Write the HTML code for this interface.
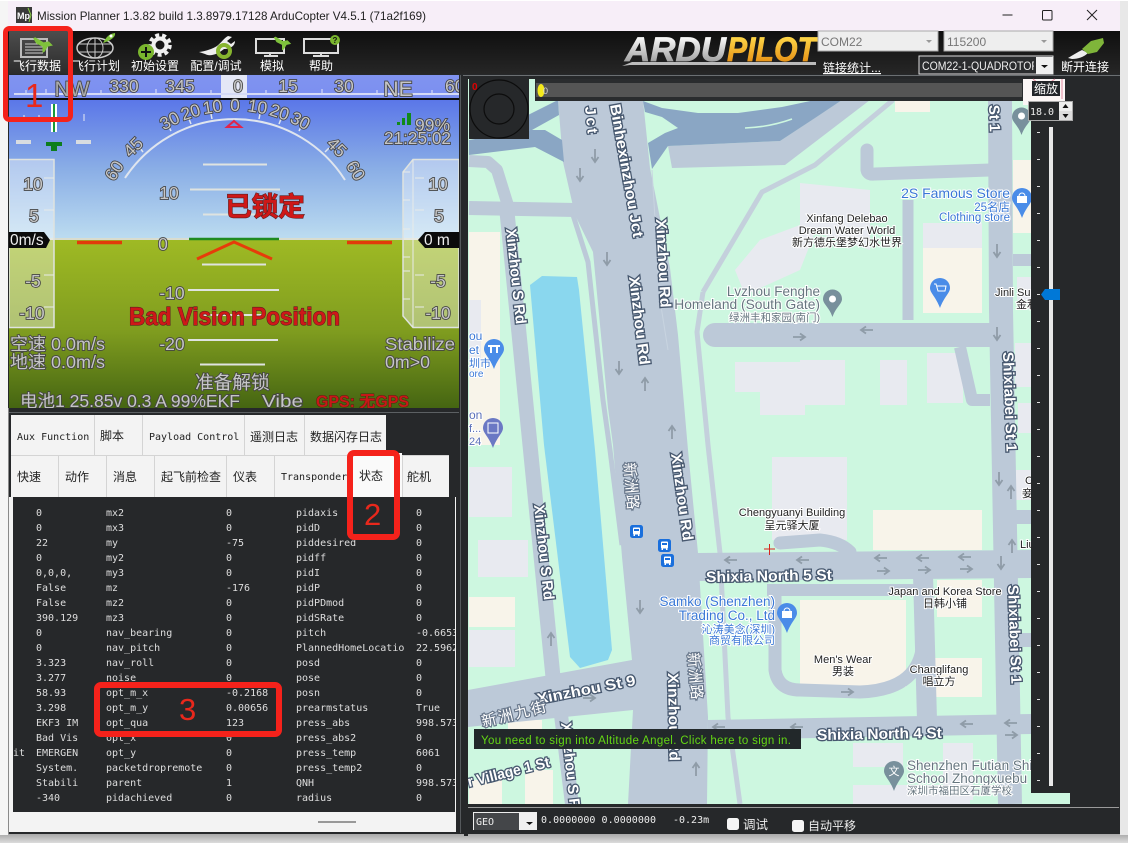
<!DOCTYPE html>
<html><head><meta charset="utf-8"><title>Mission Planner</title>
<style>
html,body{margin:0;padding:0;width:1128px;height:843px;overflow:hidden;background:#f2f2f2}
svg{position:absolute;left:0;top:0}
text{font-family:"Liberation Sans","Noto Sans CJK SC",sans-serif}
.hud{fill:#c6c6c6;stroke:#444;stroke-width:1.700px;paint-order:stroke;font-size:17.500px}
.tb{fill:#fff;font-size:12px;text-anchor:middle}
.tab{fill:#222;font-size:12px}
.tabm{fill:#222;font-size:10px;font-family:"DejaVu Sans Mono",monospace}
.rd{fill:#fff;stroke:#47586f;stroke-width:2.600px;paint-order:stroke;font-weight:bold;font-size:15px}
.cn{fill:#fff;stroke:#69788c;stroke-width:2.400px;paint-order:stroke;font-size:15px}
.poi{fill:#222;stroke:#fff;stroke-width:2px;paint-order:stroke;font-size:11px}
.blue{fill:#3a78d6;stroke:#fff;stroke-width:2px;paint-order:stroke}
.gry{fill:#66767f;stroke:#fff;stroke-width:2px;paint-order:stroke}
pre{position:absolute;margin:0;font:10px/15px "DejaVu Sans Mono",monospace;color:#dedede;top:506px}
</style></head><body>
<svg width="1128" height="843" viewBox="0 0 1128 843">
<defs>
<linearGradient id="sky" x1="0" y1="99" x2="0" y2="239" gradientUnits="userSpaceOnUse"><stop offset="0" stop-color="#5a76e8"/><stop offset=".5" stop-color="#8aaee6"/><stop offset="1" stop-color="#bcdcf0"/></linearGradient>
<linearGradient id="gnd" x1="0" y1="239" x2="0" y2="408" gradientUnits="userSpaceOnUse"><stop offset="0" stop-color="#9fba24"/><stop offset=".55" stop-color="#7f9c1f"/><stop offset="1" stop-color="#456512"/></linearGradient>
<linearGradient id="cmp" x1="0" y1="75" x2="0" y2="99" gradientUnits="userSpaceOnUse"><stop offset="0" stop-color="#8093f0"/><stop offset="1" stop-color="#7b8ff0"/></linearGradient>
<linearGradient id="sel" x1="0" y1="31" x2="0" y2="74" gradientUnits="userSpaceOnUse"><stop offset="0" stop-color="#4d4d4d"/><stop offset="1" stop-color="#2c2c2c"/></linearGradient>
<linearGradient id="tbg" x1="0" y1="31" x2="0" y2="74" gradientUnits="userSpaceOnUse"><stop offset="0" stop-color="#0f0f0f"/><stop offset="1" stop-color="#262626"/></linearGradient>
<linearGradient id="sil" x1="0" y1="36" x2="0" y2="64" gradientUnits="userSpaceOnUse"><stop offset="0" stop-color="#fff"/><stop offset="1" stop-color="#999"/></linearGradient>
<linearGradient id="gold" x1="0" y1="36" x2="0" y2="64" gradientUnits="userSpaceOnUse"><stop offset="0" stop-color="#ffd94a"/><stop offset="1" stop-color="#e58d12"/></linearGradient>
<linearGradient id="shd" x1="0" y1="834" x2="0" y2="843" gradientUnits="userSpaceOnUse"><stop offset="0" stop-color="#a8a8a8"/><stop offset="1" stop-color="#dcdcdc"/></linearGradient>
<clipPath id="hudc"><rect x="9" y="75" width="450" height="333"/></clipPath>
<clipPath id="mapc"><rect x="468" y="79" width="563" height="725"/></clipPath>
<clipPath id="comc"><rect x="922" y="57" width="112" height="17"/></clipPath>
<symbol id="dn" viewBox="0 0 10 14" overflow="visible"><path d="M5 0V12M1.500 8L5 13 8.500 8" fill="none" stroke="#8f9ca8" stroke-width="1.800"/></symbol>
<symbol id="lf" viewBox="0 0 14 10" overflow="visible"><path d="M13 5H2M6 1.500L1 5l5 3.500" fill="none" stroke="#8f9ca8" stroke-width="1.800"/></symbol>
<symbol id="rt" viewBox="0 0 14 10" overflow="visible"><path d="M1 5H12M8 1.500L13 5 8 8.500" fill="none" stroke="#8f9ca8" stroke-width="1.800"/></symbol>
<symbol id="up" viewBox="0 0 10 14" overflow="visible"><path d="M5 14V2M1.500 6L5 1l3.500 5" fill="none" stroke="#8f9ca8" stroke-width="1.800"/></symbol>
<symbol id="plane" viewBox="0 0 24 24" overflow="visible"><path d="M3 6L5 5 13 10 18 9 22 13 17 14 14 19 12 20 12 14 6 11Z" fill="#7fc23c"/></symbol>
<symbol id="bus" viewBox="0 0 13 13"><rect width="13" height="13" rx="2.500" fill="#1a6fdc"/><rect x="3" y="2.500" width="7" height="7" rx="1" fill="#fff"/><rect x="4" y="4" width="5" height="2" fill="#1a6fdc"/><rect x="3.500" y="9.500" width="1.500" height="1.500" fill="#fff"/><rect x="8" y="9.500" width="1.500" height="1.500" fill="#fff"/></symbol>
</defs>

<!-- window -->
<rect x="0" y="834" width="1128" height="9" fill="url(#shd)"/>
<rect x="0" y="0" width="8" height="835" fill="#f5f5f5"/>
<rect x="1120" y="0" width="8" height="835" fill="#e8e8e8"/>
<rect x="0" y="0" width="1128" height="1" fill="#fff"/>
<rect x="8" y="1" width="1112" height="30" fill="#f7eef8"/>
<rect x="8" y="31" width="1112" height="803" fill="#26282a"/>
<rect x="8" y="408" width="1" height="426" fill="#8a8a8a"/>
<rect x="16" y="7" width="16" height="16" fill="#3a3a3a"/><text x="17" y="19" font-size="9" font-weight="bold" fill="#fff">Mp</text><path d="M28 8l3 7-2 7" stroke="#8c4" fill="none"/>
<text x="37" y="20" font-size="12" fill="#222" textLength="389" lengthAdjust="spacingAndGlyphs">Mission Planner 1.3.82 build 1.3.8979.17128 ArduCopter V4.5.1 (71a2f169)</text>
<path d="M1002.500 15H1012.500" stroke="#222"/><rect x="1042.500" y="10.500" width="9.500" height="9.500" rx="1" fill="none" stroke="#222"/><path d="M1087 10L1097 20M1097 10L1087 20" stroke="#222"/>

<!-- toolbar -->
<rect x="8" y="31" width="1112" height="43" fill="url(#tbg)"/>
<rect x="9" y="31" width="61" height="43" fill="url(#sel)"/>
<g fill="none" stroke="#d5d5d5">
<path d="M21 39H47V57H21Z" stroke-width="2" stroke="#bbb"/><path d="M25 44H43M25 47H43M25 50H43M25 53H43" stroke="#ccc"/>
<ellipse cx="95" cy="48" rx="18" ry="10" stroke="#ccc" stroke-width="1.500"/><ellipse cx="95" cy="48" rx="8" ry="10" stroke="#ccc"/><path d="M95 38V58M78 44H112M78 52H112" stroke="#ccc"/>
<path d="M256 39H284V53H256Z" stroke="#ddd" stroke-width="2"/><path d="M264 56H278M270 54V57" stroke="#ddd" stroke-width="2"/>
<path d="M304 39H338V53H304Z" stroke="#ddd" stroke-width="2"/><path d="M313 56H329M321 54V57" stroke="#ddd" stroke-width="2"/>
</g>
<use href="#plane" x="30" y="32" width="25" height="25"/>
<path d="M103 43C106 38 108 34 115 33 116 37 110 41 103 43Z" fill="#7fc23c"/><circle cx="111" cy="36" r="1.500" fill="#fff"/>
<circle cx="160" cy="45" r="6.500" fill="none" stroke="#f0f0f0" stroke-width="4"/><circle cx="160" cy="45" r="10" fill="none" stroke="#f0f0f0" stroke-width="3.500" stroke-dasharray="4 3"/>
<circle cx="146" cy="52" r="8" fill="#7ab52e"/><path d="M141 52H151M146 47V57" stroke="#111" stroke-width="2"/>
<path d="M199 52C206 51 212 49 217 46 222 42 224 38 228 36L232 37 227 41 231 44 235 41C235 46 230 49 224 49 218 54 210 57 205 54Z" fill="#eee"/>
<circle cx="224" cy="51" r="6" fill="none" stroke="#87b52f" stroke-width="4"/>
<use href="#plane" x="271" y="32" width="22" height="22"/>
<circle cx="335" cy="40" r="5" fill="#7ab52e"/><text x="335" y="43" font-size="8" font-weight="bold" text-anchor="middle" fill="#111">?</text>
<text class="tb" x="37" y="70">飞行数据</text>
<text class="tb" x="96" y="70">飞行计划</text>
<text class="tb" x="155" y="70">初始设置</text>
<text class="tb" x="216" y="70">配置/调试</text>
<text class="tb" x="272" y="70">模拟</text>
<text class="tb" x="321" y="70">帮助</text>
<!-- logo -->
<text x="625" y="61" font-size="34" font-weight="bold" font-style="italic" fill="url(#sil)" stroke="url(#sil)" stroke-width=".7" textLength="101" lengthAdjust="spacingAndGlyphs">ARDU</text>
<text x="727" y="61" font-size="34" font-weight="bold" font-style="italic" fill="url(#gold)" stroke="url(#gold)" stroke-width=".7" textLength="89" lengthAdjust="spacingAndGlyphs">PILOT</text>
<path d="M622 66L632 62H816V65H630Z" fill="#bbb"/>
<!-- combos -->
<rect x="818" y="31" width="120" height="20" fill="#eee" stroke="#aaa"/><text x="821" y="46" font-size="12" fill="#777">COM22</text><path d="M926 40h6l-3 3z" fill="#999"/>
<rect x="944" y="31" width="109" height="20" fill="#eee" stroke="#aaa"/><text x="947" y="46" font-size="12" fill="#777">115200</text><path d="M1041 40h6l-3 3z" fill="#999"/>
<text x="823" y="72" font-size="12" fill="#fff" text-decoration="underline">链接统计...</text>
<rect x="919" y="56" width="134" height="18" fill="#2a2c2e" stroke="#ddd"/>
<g clip-path="url(#comc)"><text x="922" y="70" font-size="12" fill="#eee" textLength="117" lengthAdjust="spacingAndGlyphs">COM22-1-QUADROTOR</text></g>
<rect x="1036" y="57" width="17" height="17" fill="#f0f0f0"/><path d="M1041 65h7l-3.500 3z" fill="#111"/>
<path d="M1068 58C1073 55 1078 52 1082 50L1088 53C1084 57 1078 59 1072 59Z" fill="#eee"/><path d="M1082 49L1091 41 1103 38 1104 43 1097 52 1088 54Z" fill="#7fb53a"/>
<text class="tb" x="1085" y="71">断开连接</text>

<!-- HUD -->
<g clip-path="url(#hudc)">
<rect x="9" y="99" width="450" height="140" fill="url(#sky)"/>
<rect x="9" y="239" width="450" height="170" fill="url(#gnd)"/>
<rect x="9" y="75" width="450" height="24" fill="url(#cmp)"/>
<rect x="221" y="75" width="26" height="24" fill="#e4e7f6"/>
<rect x="14" y="93" width="445" height="2" fill="#d5daf5"/>
<path d="M26 93v-3M46 93v-4M101 93v-3M156 93v-4M211 93v-3M266 93v-3M322 93v-4M377 93v-3M432 93v-3" stroke="#e8eaf8"/>
<rect x="9" y="98" width="450" height="2" fill="#0c0c0c"/>
<text class="hud" x="72" y="96" text-anchor="middle" style="font-size:21px;fill:#aaa">NW</text>
<text class="hud" x="124" y="92" text-anchor="middle">330</text>
<text class="hud" x="180" y="92" text-anchor="middle">345</text>
<text class="hud" x="238" y="92" text-anchor="middle">0</text>
<text class="hud" x="288" y="92" text-anchor="middle">15</text>
<text class="hud" x="344" y="92" text-anchor="middle">30</text>
<text class="hud" x="398" y="96" text-anchor="middle" style="font-size:21px">NE</text>
<text class="hud" x="445" y="92">60</text>
<!-- arc -->
<path d="M125 178A131 131 0 0 1 345 180" fill="none" stroke="#dfe5ee" stroke-width="2"/>
<g stroke="#dfe5ee" stroke-width="1.500">
<path d="M212 119l-1-5M191 124l-2-5M171 131l-2-4M143 152l-3-4M259 119l1-5M279 124l2-5M299 131l2-4M325 152l4-4"/>
</g>
<text class="hud" x="235" y="111" text-anchor="middle" transform="rotate(0 235 249)">0</text>
<text class="hud" x="235" y="111" text-anchor="middle" transform="rotate(-9 235 249)">10</text>
<text class="hud" x="235" y="111" text-anchor="middle" transform="rotate(-18 235 249)">20</text>
<text class="hud" x="235" y="111" text-anchor="middle" transform="rotate(-27 235 249)">30</text>
<text class="hud" x="235" y="111" text-anchor="middle" transform="rotate(-45 235 249)">45</text>
<text class="hud" x="235" y="111" text-anchor="middle" transform="rotate(-57 235 249)">60</text>
<text class="hud" x="235" y="111" text-anchor="middle" transform="rotate(9 235 249)">10</text>
<text class="hud" x="235" y="111" text-anchor="middle" transform="rotate(18 235 249)">20</text>
<text class="hud" x="235" y="111" text-anchor="middle" transform="rotate(27 235 249)">30</text>
<text class="hud" x="235" y="111" text-anchor="middle" transform="rotate(45 235 249)">45</text>
<text class="hud" x="235" y="111" text-anchor="middle" transform="rotate(57 235 249)">60</text>
<path d="M234 121L241 127H227Z" fill="none" stroke="#e2234a" stroke-width="2"/>
<!-- pitch -->
<g stroke="#dfe3e0" stroke-width="2" fill="none">
<path d="M203 164.500H267M190 189.500H280M203 214.500H267M202 264.500H266M188 290H279M200 315H265M188 340H278M200 364.500H265"/>
<path d="M9 239H459" stroke="#d9dccf"/>
</g>
<path d="M189 239H279" stroke="#1f8a1f" stroke-width="2.500"/>
<path d="M77 242.500H122M347 242.500H392" stroke="#e23a0a" stroke-width="3.500"/>
<path d="M197 259L234 242 272 259" fill="none" stroke="#e63c0a" stroke-width="3"/>
<text class="hud" x="169" y="199" text-anchor="middle">10</text>
<text class="hud" x="163" y="250" text-anchor="middle">0</text>
<text class="hud" x="172" y="299" text-anchor="middle">-10</text>
<text class="hud" x="172" y="350" text-anchor="middle">-20</text>
<!-- tapes -->
<rect x="9" y="159.500" width="45" height="168" fill="#fff" fill-opacity=".38" stroke="#dfe3df" stroke-width="1.500"/>
<path d="M44 178H54M44 210H54M44 275H54M44 307H54" stroke="#e8ebe8"/>
<text class="hud" x="33" y="190" text-anchor="middle">10</text>
<text class="hud" x="34" y="222" text-anchor="middle">5</text>
<text class="hud" x="33" y="287" text-anchor="middle">-5</text>
<text class="hud" x="32" y="319" text-anchor="middle">-10</text>
<path d="M413 159.500H459V327.500H413L403 316V172Z" fill="#fff" fill-opacity=".38" stroke="#dfe3df" stroke-width="1.500"/>
<path d="M413 160V327M403 172H410M403 200H410M403 229H410M403 257H410M403 271H410M403 299H410M415 178H424M415 210H424M415 275H424M415 307H424" stroke="#e8ebe8"/>
<text class="hud" x="438" y="190" text-anchor="middle">10</text>
<text class="hud" x="439" y="222" text-anchor="middle">5</text>
<text class="hud" x="438" y="287" text-anchor="middle">-5</text>
<text class="hud" x="438" y="319" text-anchor="middle">-10</text>
<path d="M9 232H44L50 240 46 248H9Z" fill="#0b0b0b"/><text x="10" y="245" font-size="15.500" fill="#eee">0m/s</text>
<path d="M425 232H459V248H425L418 240Z" fill="#0b0b0b"/><text x="424" y="245" font-size="15.500" fill="#eee">0 m</text>
<!-- top-left indicators -->
<rect x="51" y="104" width="6" height="28" fill="#fff"/><rect x="53" y="104" width="2" height="28" fill="#1a9a3a"/>
<path d="M16 142H31M76 142H91" stroke="#d8dce0" stroke-width="4"/>
<path d="M46 142H62V146H57V151H51V146H46Z" fill="#0d7d1d"/>
<path d="M24 115v3M39 115v3M84 114v7" stroke="#e8eaf2"/>
<!-- signal -->
<path d="M397 122h3v3h-3zM402 118h3v7h-3zM407 113h4v12h-4z" fill="#118a1a"/>
<text class="hud" x="415" y="131">99%</text>
<text class="hud" x="384" y="144" textLength="67" lengthAdjust="spacingAndGlyphs">21:25:02</text>
<text x="265" y="216" text-anchor="middle" font-size="26.500" font-weight="bold" fill="#cf1818" stroke="#5d2020" stroke-width="1.200" paint-order="stroke">已锁定</text>
<text x="129" y="325" font-size="25" font-weight="bold" fill="#cf1818" stroke="#5d2020" stroke-width="1.200" paint-order="stroke" textLength="211" lengthAdjust="spacingAndGlyphs">Bad Vision Position</text>
<text class="hud" x="10" y="350" textLength="95" lengthAdjust="spacingAndGlyphs">空速 0.0m/s</text>
<text class="hud" x="10" y="368" textLength="95" lengthAdjust="spacingAndGlyphs">地速 0.0m/s</text>
<text class="hud" x="385" y="350" textLength="70" lengthAdjust="spacingAndGlyphs">Stabilize</text>
<text class="hud" x="385" y="368" textLength="45" lengthAdjust="spacingAndGlyphs">0m&gt;0</text>
<text class="hud" x="195" y="389" style="font-size:18.700px">准备解锁</text>
<text class="hud" x="20" y="407" textLength="220" lengthAdjust="spacingAndGlyphs">电池1 25.85v 0.3 A 99%EKF</text>
<text class="hud" x="262" y="407" textLength="41" lengthAdjust="spacingAndGlyphs">Vibe</text>
<text x="316" y="407" font-size="16.500" font-weight="bold" fill="#c81818" stroke="#4a2a10" paint-order="stroke" textLength="93" lengthAdjust="spacingAndGlyphs">GPS: 无GPS</text>
</g>

<!-- tabs -->
<rect x="9" y="412" width="450" height="1" fill="#5c6063"/>
<rect x="11" y="415" width="375" height="40" fill="#d4d4d4"/>
<rect x="11" y="455" width="438" height="42" fill="#d4d4d4"/>
<g fill="#f3f3f3">
<rect x="11" y="415" width="83" height="40"/><rect x="95" y="415" width="47" height="40"/><rect x="143" y="415" width="101" height="40"/><rect x="245" y="415" width="59" height="40"/><rect x="305" y="415" width="81" height="40"/>
<rect x="11" y="456" width="47" height="41"/><rect x="59" y="456" width="47" height="41"/><rect x="107" y="456" width="47" height="41"/><rect x="155" y="456" width="71" height="41"/><rect x="227" y="456" width="47" height="41"/><rect x="275" y="456" width="72" height="41"/><rect x="347" y="453" width="55" height="44" fill="#fafafa"/><rect x="403" y="456" width="46" height="41"/>
</g>
<text class="tabm" x="17" y="440">Aux Function</text>
<text class="tab" x="100" y="440">脚本</text>
<text class="tabm" x="149" y="440">Payload Control</text>
<text class="tab" x="250" y="441">遥测日志</text>
<text class="tab" x="310" y="441">数据闪存日志</text>
<text class="tab" x="17" y="481">快速</text>
<text class="tab" x="65" y="481">动作</text>
<text class="tab" x="113" y="481">消息</text>
<text class="tab" x="161" y="481">起飞前检查</text>
<text class="tab" x="233" y="481">仪表</text>
<text class="tabm" x="281" y="480">Transponder</text>
<text class="tab" x="359" y="480">状态</text>
<text class="tab" x="407" y="481">舵机</text>
<!-- grid frame -->
<rect x="9" y="497" width="447" height="335" fill="#f3f3f3"/>
<rect x="13" y="497" width="442" height="315" fill="#26282a"/>
<rect x="318" y="821" width="38" height="2" fill="#999"/>
<rect x="460" y="75" width="1" height="758" fill="#55595c"/>

<!-- map -->
<g clip-path="url(#mapc)">
<rect x="468" y="79" width="563" height="725" fill="#cdf7e0"/>
<g fill="#f8f4ea">
<rect x="469" y="232" width="31" height="213"/><rect x="469" y="597" width="46" height="30"/><rect x="469" y="780" width="33" height="24"/><rect x="525" y="770" width="28" height="34"/><rect x="508" y="720" width="34" height="30"/>
<rect x="923" y="248" width="59" height="65"/><rect x="1013" y="160" width="18" height="73"/><rect x="873" y="510" width="109" height="40"/><rect x="800" y="600" width="106" height="87"/><rect x="937" y="580" width="45" height="37"/><rect x="933" y="658" width="49" height="39"/><rect x="895" y="100" width="35" height="12"/>
</g>
<g fill="#e8eaf0">
<rect x="469" y="300" width="12" height="60"/><rect x="469" y="467" width="43" height="50"/><rect x="478" y="540" width="50" height="37"/><rect x="469" y="630" width="46" height="37"/>
<path d="M735 270L760 240 800 225 800 183 870 190 870 250 815 232 800 270 745 295Z"/><rect x="735" y="362" width="70" height="30"/><rect x="760" y="385" width="45" height="30"/><rect x="800" y="360" width="45" height="45"/><rect x="880" y="360" width="27" height="45"/><rect x="927" y="353" width="36" height="50"/><rect x="923" y="223" width="59" height="25"/><rect x="1017" y="277" width="14" height="23"/><rect x="1015" y="343" width="16" height="44"/><rect x="1018" y="403" width="13" height="30"/><rect x="772" y="457" width="75" height="83"/><rect x="853" y="743" width="50" height="24"/><rect x="943" y="743" width="30" height="57"/><rect x="853" y="785" width="117" height="19"/><rect x="1016" y="470" width="15" height="30"/>
</g>
<!-- water -->
<path d="M530 285L542 276 577 277 579 290 595 450 612 650 608 660 580 668 570 657 544 445Z" fill="#8ad7ee"/>
<!-- roads -->
<g fill="none" stroke="#bcc9d8" stroke-linejoin="round">
<path d="M469 161L488 162 497 170 510 212" stroke-width="12"/>
<path d="M469 208L575 210" stroke-width="14"/>
<path d="M507 212L530 445 553 677" stroke-width="15"/>
<path d="M561 715L572 804" stroke-width="14"/>
<path d="M703 292L762 192 815 165 893 100" stroke-width="5" stroke="#c4d0dc"/>
<path d="M703 292L697 332 708 445 720 553 728 717 740 804" stroke-width="5" stroke="#c4d0dc"/>
<path d="M573 215L588 262 603 400 610 450 622 545" stroke-width="5"/>
<path d="M715 335L1000 335" stroke-width="24" stroke-linecap="round"/>
<path d="M867 150L867 170Q868 175 875 174L990 170" stroke-width="13" stroke-linecap="round"/>
<path d="M908 200V320" stroke-width="11"/>
<path d="M1013 260H1032" stroke-width="12"/>
<path d="M960 347L972 400H990" stroke-width="12"/>
<path d="M1000 100L1001 310 1010 804" stroke-width="24"/>
<path d="M698 567L1032 564" stroke-width="28"/>
<path d="M708 730L1032 724" stroke-width="20"/>
<path d="M923 575L927 720" stroke-width="20"/>
<path d="M767 590H915" stroke-width="12"/>
<path d="M775 590L775 670Q778 690 800 690L860 692Q915 690 922 650" stroke-width="13"/>
<path d="M780 543L820 540Q840 542 850 552" stroke-width="13" stroke-linecap="round"/>
<path d="M1012 517H1032M1012 640H1032" stroke-width="14"/>
</g>
<!-- main road -->
<path d="M558 100H643L650 168 670 268 678 335 688 450 698 553 708 717 707 804H628L633 710 468 727V690L632 660 622 557 613 445 608 408 593 252 575 215 563 162Z" fill="#bcc9d8"/>
<path d="M652 170L660 300 668 350" fill="none" stroke="#c8d4e0"/>
<!-- light road -->
<path d="M668 146L780 141 842 100H870L785 165 672 168Z" fill="#bcc9d8"/>
<!-- highways -->
<g fill="#8aa6c4">
<path d="M469 140L530 130 545 130 562 140 564 162 535 147 469 155Z"/>
<path d="M528 115L558 100 559 115 532 130 528 130Z"/>
<path d="M643 101L662 108 698 113 738 113 782 107 815 100H842L815 118 780 141 668 146 652 169 648 143 665 133 678 128 662 117 645 112Z"/>
</g>
<path d="M745 128Q770 127 792 119" fill="none" stroke="#cdf7e0" stroke-width="1.500"/>
<!-- arrows -->
<use href="#dn" x="590" y="149" width="10" height="14"/><use href="#dn" x="575" y="168" width="10" height="14"/><use href="#dn" x="602" y="252" width="10" height="14"/><use href="#dn" x="614" y="361" width="10" height="14"/><use href="#up" x="640" y="377" width="10" height="14"/><use href="#up" x="667" y="425" width="10" height="14"/>
<use href="#dn" x="635" y="600" width="10" height="14"/><use href="#up" x="546" y="632" width="10" height="14"/><use href="#rt" x="582" y="693" width="14" height="10"/><use href="#up" x="691" y="762" width="10" height="14"/>
<use href="#lf" x="724" y="555" width="14" height="10"/><use href="#lf" x="796" y="555" width="14" height="10"/><use href="#lf" x="874" y="553" width="14" height="10"/><use href="#lf" x="916" y="553" width="14" height="10"/><use href="#lf" x="958" y="552" width="14" height="10"/><use href="#rt" x="876" y="566" width="14" height="10"/><use href="#rt" x="917" y="565" width="14" height="10"/><use href="#rt" x="959" y="564" width="14" height="10"/>
<use href="#lf" x="860" y="325" width="14" height="10"/><use href="#rt" x="792" y="332" width="14" height="10"/><use href="#dn" x="992" y="244" width="10" height="14"/><use href="#dn" x="992" y="327" width="10" height="14"/>
<use href="#dn" x="994" y="472" width="10" height="14"/><use href="#up" x="1006" y="485" width="10" height="14"/><use href="#up" x="1007" y="539" width="10" height="14"/><use href="#dn" x="996" y="556" width="10" height="14"/>
<use href="#lf" x="960" y="719" width="14" height="10"/><use href="#lf" x="1004" y="718" width="14" height="10"/><use href="#rt" x="1004" y="730" width="14" height="10"/><use href="#rt" x="840" y="687" width="14" height="10"/><use href="#lf" x="712" y="722" width="14" height="10"/><use href="#lf" x="790" y="722" width="14" height="10"/>
<!-- road labels -->
<text class="rd" transform="translate(585,107) rotate(84)" textLength="27">Jct</text>
<text class="rd" transform="translate(610,105) rotate(80)" textLength="135" lengthAdjust="spacingAndGlyphs">Binhexinzhou Jct</text>
<text class="rd" transform="translate(656,219) rotate(87)" textLength="89" lengthAdjust="spacingAndGlyphs">Xinzhou Rd</text>
<text class="rd" transform="translate(629,277) rotate(83)" textLength="89" lengthAdjust="spacingAndGlyphs">Xinzhou Rd</text>
<text class="rd" transform="translate(506,229) rotate(84)" textLength="96" lengthAdjust="spacingAndGlyphs">Xinzhou S Rd</text>
<text class="rd" transform="translate(534,505) rotate(84)" textLength="96" lengthAdjust="spacingAndGlyphs">Xinzhou S Rd</text>
<text class="rd" transform="translate(671,454) rotate(82)" textLength="88" lengthAdjust="spacingAndGlyphs">Xinzhou Rd</text>
<text class="rd" transform="translate(668,673) rotate(89)" textLength="88" lengthAdjust="spacingAndGlyphs">Xinzhou Rd</text>
<text class="rd" transform="translate(561,723) rotate(84)" textLength="96" lengthAdjust="spacingAndGlyphs">Xinzhou S Rd</text>
<text class="cn" transform="translate(624,463) rotate(85)" textLength="47">新洲路</text>
<text class="cn" transform="translate(688,653) rotate(85)" textLength="47">新洲路</text>
<text class="rd" transform="translate(538,704) rotate(-11)" textLength="100" lengthAdjust="spacingAndGlyphs">Xinzhou St 9</text>
<text class="cn" transform="translate(483,727) rotate(-14)" textLength="66">新洲九街</text>
<text class="rd" transform="translate(469,787) rotate(-14)" textLength="84" lengthAdjust="spacingAndGlyphs">r Village 1 St</text>
<text class="rd" transform="translate(706,582) rotate(-1)" textLength="126" lengthAdjust="spacingAndGlyphs">Shixia North 5 St</text>
<text class="rd" transform="translate(817,740) rotate(-1)" textLength="125" lengthAdjust="spacingAndGlyphs">Shixia North 4 St</text>
<text class="rd" transform="translate(989,105) rotate(88)" textLength="27">St 1</text>
<text class="rd" transform="translate(1003,352) rotate(88)" textLength="100" lengthAdjust="spacingAndGlyphs">Shixiabei St 1</text>
<text class="rd" transform="translate(1008,585) rotate(88)" textLength="99" lengthAdjust="spacingAndGlyphs">Shixiabei St 1</text>
<!-- POI text -->
<text class="blue" x="1010" y="198" font-size="14" text-anchor="end">2S Famous Store</text>
<text class="blue" x="1010" y="211" font-size="11.500" text-anchor="end">25名店</text>
<text class="blue" x="1010" y="221" font-size="11.500" text-anchor="end">Clothing store</text>
<text class="poi" x="847" y="222" text-anchor="middle">Xinfang Delebao</text>
<text class="poi" x="847" y="234" text-anchor="middle">Dream Water World</text>
<text class="poi" x="847" y="246" text-anchor="middle">新方德乐堡梦幻水世界</text>
<text class="gry" x="820" y="296" font-size="13.500" text-anchor="end">Lvzhou Fenghe</text>
<text class="gry" x="820" y="309" font-size="13.800" text-anchor="end">Homeland (South Gate)</text>
<text class="gry" x="820" y="321" font-size="10.500" text-anchor="end">绿洲丰和家园(南门)</text>
<text class="poi" x="792" y="516" text-anchor="middle">Chengyuanyi Building</text>
<text class="poi" x="792" y="529" text-anchor="middle">呈元驿大厦</text>
<text class="blue" x="775" y="606" font-size="13.500" text-anchor="end">Samko (Shenzhen)</text>
<text class="blue" x="775" y="620" font-size="13.500" text-anchor="end">Trading Co., Ltd</text>
<text class="blue" x="775" y="633" font-size="11" text-anchor="end">沁涛美念(深圳)</text>
<text class="blue" x="775" y="644" font-size="11" text-anchor="end">商贸有限公司</text>
<text class="poi" x="945" y="595" text-anchor="middle">Japan and Korea Store</text>
<text class="poi" x="945" y="607" text-anchor="middle">日韩小铺</text>
<text class="poi" x="843" y="663" text-anchor="middle">Men's Wear</text>
<text class="poi" x="843" y="675" text-anchor="middle">男装</text>
<text class="poi" x="939" y="673" text-anchor="middle">Changlifang</text>
<text class="poi" x="939" y="685" text-anchor="middle">唱立方</text>
<text class="gry" x="907" y="770" font-size="13.500">Shenzhen Futian Shi</text>
<text class="gry" x="907" y="783" font-size="13.500">School Zhongxuebu</text>
<text class="gry" x="907" y="794" font-size="10.500">深圳市福田区石厦学校</text>
<text class="poi" x="995" y="296">Jinli Su</text><text class="poi" x="1016" y="308">金利</text>
<text class="poi" x="1025" y="484">C</text><text class="poi" x="1022" y="497">妾</text><text class="poi" x="1020" y="548">Liu</text>
<text class="blue" x="469" y="340" font-size="12">ou</text><text class="blue" x="469" y="354" font-size="12">et</text><text class="blue" x="469" y="367" font-size="11">圳市</text><text class="blue" x="469" y="377" font-size="10">ore</text>
<text class="gry" x="469" y="419" font-size="12" style="fill:#5a6fb8">on</text><text class="gry" x="469" y="432" font-size="11" style="fill:#5a6fb8">f...</text><text class="gry" x="469" y="445" font-size="11" style="fill:#5a6fb8">24</text>
<!-- pins -->
<g>
<path d="M484 349a10 10 0 1 1 20 0c0 5-6 9-10 20-4-11-10-15-10-20Z" fill="#4a8ce8"/><path d="M488 345h12v2h-12zM490 347v6h2v-6zM496 347v6h2v-6z" fill="#fff"/>
<path d="M483 428a10 10 0 1 1 20 0c0 5-6 9-10 20-4-11-10-15-10-20Z" fill="#6b78c4"/><rect x="488" y="423" width="10" height="10" fill="none" stroke="#fff"/>
<path d="M1012 117a9.500 9.500 0 1 1 19 0c0 5-6 8-9.500 18-3.500-10-9.500-13-9.500-18Z" fill="#78909c"/><circle cx="1021.500" cy="116" r="3.500" fill="#fff"/>
<path d="M823 299a9.500 9.500 0 1 1 19 0c0 5-6 8-9.500 18-3.500-10-9.500-13-9.500-18Z" fill="#78909c"/><circle cx="832.500" cy="299" r="3.500" fill="#fff"/>
<path d="M1012 198a10 10 0 1 1 20 0c0 5-6 9-10 20-4-11-10-15-10-20Z" fill="#4a8ce8"/><rect x="1017" y="196" width="10" height="7" fill="#fff"/><path d="M1019 196a3 3 0 0 1 6 0" stroke="#fff" fill="none"/>
<path d="M930 288a10 10 0 1 1 20 0c0 5-6 9-10 20-4-11-10-15-10-20Z" fill="#4a8ce8"/><path d="M934 284h2l2 7h7l1-5h-9" stroke="#fff" fill="none"/>
<path d="M777 613a10 10 0 1 1 20 0c0 5-6 9-10 20-4-11-10-15-10-20Z" fill="#4a8ce8"/><rect x="782" y="611" width="10" height="7" fill="#fff"/><path d="M784 611a3 3 0 0 1 6 0" stroke="#fff" fill="none"/>
<path d="M884 771a10 10 0 1 1 20 0c0 5-6 9-10 20-4-11-10-15-10-20Z" fill="#78909c"/><text x="894" y="775" font-size="11" text-anchor="middle" fill="#fff">文</text>
</g>
<use href="#bus" x="630" y="525" width="13" height="13"/><use href="#bus" x="658" y="539" width="13" height="13"/><use href="#bus" x="661" y="554" width="13" height="13"/>
<path d="M764 549H775M769.500 544V555" stroke="#d8261c"/>
<!-- alt angel -->
<rect x="474" y="729" width="327" height="20" fill="#22282a"/>
<text x="481" y="744" font-size="11.500" fill="#63d614" textLength="310">You need to sign into Altitude Angel. Click here to sign in.</text>
<!-- top overlays -->
<rect x="469" y="79" width="60" height="60" fill="#26282a"/>
<circle cx="499" cy="109" r="29" fill="none" stroke="#0c0c0c" stroke-width="1.200"/><circle cx="499" cy="109" r="15" fill="none" stroke="#0c0c0c" stroke-width="1.200"/>
<text x="472" y="90" font-size="10" font-weight="bold" fill="#e00000">0</text>
<rect x="535" y="79" width="488" height="22" fill="#2a2c2e"/><rect x="536" y="83" width="486" height="14" fill="#555"/>
<ellipse cx="541" cy="90.500" rx="3.500" ry="6.500" fill="#f5e91c"/><text x="543" y="94" font-size="9" fill="#ddd">0</text>
</g>
<!-- top line of map panel -->
<rect x="463" y="75" width="657" height="1" fill="#6b6f72"/>
<rect x="464" y="76" width="4" height="760" fill="#26282a"/>

<!-- right panel -->
<rect x="1031" y="105" width="89" height="688" fill="#26282a"/>
<rect x="1070" y="76" width="50" height="729" fill="#26282a"/>
<rect x="1023" y="79" width="42" height="26" fill="#fbf6f6"/><path d="M1033 79l10 8 12-8M1062 79v20" stroke="#e08aa0" fill="none"/>
<rect x="1065" y="76" width="6" height="30" fill="#26282a"/>
<rect x="1031" y="793" width="39" height="11" fill="#cdf7e0"/>
<rect x="1032" y="81" width="28" height="15" fill="#22252a"/>
<text x="1034" y="93" font-size="12" fill="#fff">缩放</text>
<rect x="1028.500" y="101.500" width="44" height="19" fill="#26282a" stroke="#aaa"/>
<text x="1030" y="115" font-size="10" fill="#eee" style="font-family:'DejaVu Sans Mono',monospace">18.0</text>
<rect x="1059" y="102" width="13" height="9" fill="#eee"/><rect x="1059" y="111" width="13" height="9" fill="#ddd"/>
<path d="M1065.500 104l3 4h-6zM1062.500 114h6l-3 4z" fill="#111"/>
<rect x="1049" y="127" width="4" height="659" fill="#e8e8e8"/>
<path d="M1037 132.500h3M1037 159.500h3M1037 186.500h3M1037 213.500h3M1037 240.500h3M1037 267.500h3M1037 294.500h3M1037 321.500h3M1037 348.500h3M1037 375.500h3M1037 402.500h3M1037 429.500h3M1037 456.500h3M1037 483.500h3M1037 510.500h3M1037 537.500h3M1037 564.500h3M1037 591.500h3M1037 618.500h3M1037 645.500h3M1037 672.500h3M1037 699.500h3M1037 726.500h3M1037 753.500h3M1037 780.500h3" stroke="#ddd"/>
<path d="M1041 294.500L1045 289H1060V300H1045Z" fill="#0078d7"/>

<!-- bottom bar -->
<rect x="468" y="804" width="652" height="30" fill="#26282a"/>
<rect x="468" y="807" width="651" height="1" fill="#9a9a9a"/>
<rect x="473" y="812" width="46" height="18" fill="#444649"/><path d="M473.500 830V812.500H519" stroke="#eee" fill="none"/>
<rect x="519" y="812" width="18" height="18" fill="#f0f0f0"/><path d="M526 822h7l-3.500 3z" fill="#111"/>
<text x="476" y="825" font-size="10" fill="#eee" style="font-family:'DejaVu Sans Mono',monospace">GEO</text>
<text x="541" y="823" font-size="10" fill="#eee" style="font-family:'DejaVu Sans Mono',monospace" textLength="115">0.0000000 0.0000000</text>
<text x="673" y="823" font-size="10" fill="#eee" style="font-family:'DejaVu Sans Mono',monospace">-0.23m</text>
<rect x="727" y="818" width="12" height="12" rx="2.500" fill="#f5f5f5"/><text x="743" y="829" font-size="12.500" fill="#eee">调试</text>
<rect x="792" y="820" width="12" height="12" rx="2.500" fill="#f5f5f5"/><text x="808" y="830" font-size="12" fill="#eee">自动平移</text>
</svg>

<pre style="left:13px;width:20px;overflow:hidden;top:746px">it</pre>
<pre style="left:36px">0
0
22
0
0,0,0,
False
False
390.129
0
0
3.323
3.277
58.93
3.298
EKF3 IM
Bad Vis
EMERGEN
System.
Stabili
-340</pre>
<pre style="left:106px">mx2
mx3
my
my2
my3
mz
mz2
mz3
nav_bearing
nav_pitch
nav_roll
noise
opt_m_x
opt_m_y
opt_qua
opt_x
opt_y
packetdropremote
parent
pidachieved</pre>
<pre style="left:226px">0
0
-75
0
0
-176
0
0
0
0
0
0
-0.2168
0.00656
123
0
0
0
1
0</pre>
<pre style="left:296px">pidaxis
pidD
piddesired
pidff
pidI
pidP
pidPDmod
pidSRate
pitch
PlannedHomeLocatio
posd
pose
posn
prearmstatus
press_abs
press_abs2
press_temp
press_temp2
QNH
radius</pre>
<pre style="left:416px;width:39px;overflow:hidden">0
0
0
0
0
0
0
0
-0.6653
22.5962
0
0
0
True
998.573
0
6061
0
998.573
0</pre>

<svg width="1128" height="843" viewBox="0 0 1128 843" style="pointer-events:none">
<g fill="none" stroke="#f5221b">
<rect x="5.500" y="28.500" width="65" height="91" rx="4" stroke-width="5"/>
<rect x="350" y="453" width="47" height="84" rx="4" stroke-width="6"/>
<rect x="97" y="685" width="182" height="49" rx="4" stroke-width="6"/>
</g>
<g fill="#e8281c"><text x="25" y="107" font-size="33">1</text><text x="364" y="525" font-size="31">2</text><text x="179" y="720" font-size="31">3</text></g>
</svg>
</body></html>
